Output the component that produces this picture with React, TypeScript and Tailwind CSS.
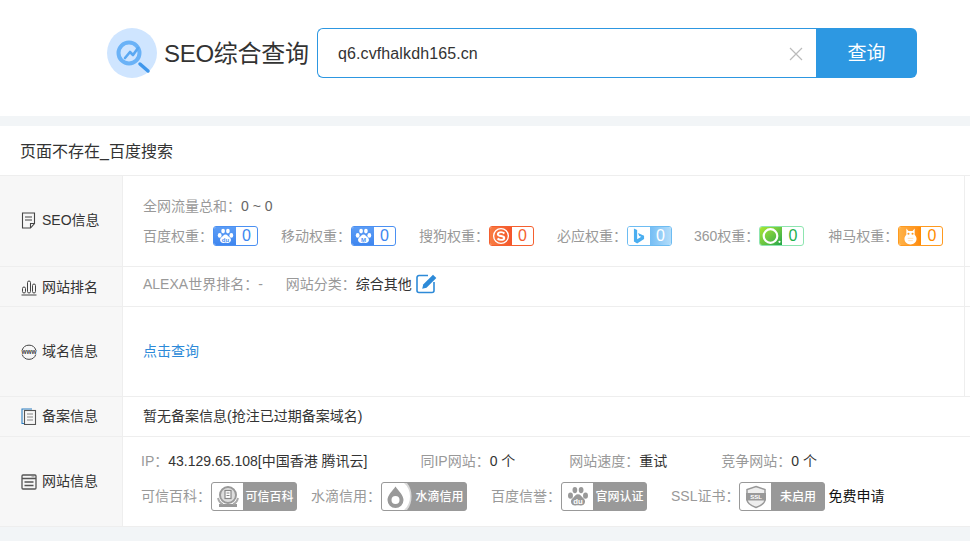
const sans = "font-['Liberation_Sans','Noto_Sans_CJK_SC',sans-serif]";

function Paw({ color = "#fff", label = "du" }: { color?: string; label?: string }) {
  return (
    <svg viewBox="0 0 24 24" className="h-full w-full">
      <ellipse cx="3.800" cy="10.500" rx="2.700" ry="3.300" fill={color} />
      <ellipse cx="8.600" cy="4.400" rx="2.600" ry="3.400" fill={color} />
      <ellipse cx="15.400" cy="4.400" rx="2.600" ry="3.400" fill={color} />
      <ellipse cx="20.200" cy="10.500" rx="2.700" ry="3.300" fill={color} />
      <path d="M12 9c2.800 0 3.400 2.200 5.200 3.800 2 1.700 2.800 3 2.400 5-.5 2.800-3 3.800-5 3.400-1.800-.3-3.400-.3-5.200 0-2 .4-4.500-.6-5-3.400-.4-2 .4-3.300 2.400-5C8.600 11.200 9.200 9 12 9z" fill={color} />
      <text x="12" y="20" textAnchor="middle" fontSize="8.500" fontWeight="700" fill={color === "#fff" ? "#4b90f2" : "#fff"} fontFamily="Liberation Sans">{label}</text>
    </svg>
  );
}

function SogouIcon() {
  return (
    <svg viewBox="0 0 20 20" className="h-[18px] w-[18px]">
      <circle cx="10" cy="10" r="8.200" fill="none" stroke="#fff" strokeWidth="1.500" />
      <path d="M13.800 7.200C12.800 6.200 11.500 5.700 10 5.700c-2.100 0-3.500 1-3.500 2.300 0 3 7.100 1.200 7.100 4.100 0 1.300-1.500 2.200-3.600 2.200-1.500 0-2.900-.5-3.900-1.500" fill="none" stroke="#fff" strokeWidth="2.200" />
    </svg>
  );
}

function BingIcon() {
  return (
    <svg viewBox="0 0 13 17" className="h-[16px] w-[12px]">
      <path d="M1 .5 4.500 2v10l4.500-2.600-2.300-1-1.300-3.200L12 8.200v3.600L4.500 16.500 1 14.500z" fill="#4aaef0" />
    </svg>
  );
}

function Icon360() {
  return (
    <svg viewBox="0 0 22 20" className="h-[20px] w-[22px]">
      <circle cx="10.500" cy="10" r="6.800" fill="none" stroke="#fff" strokeWidth="2.200" />
      <circle cx="19.500" cy="15.800" r="1.100" fill="#fff" />
    </svg>
  );
}

function OwlIcon() {
  return (
    <svg viewBox="0 0 14 18" className="h-[17px] w-[13px]">
      <path d="M2.500.5 4.800 3h4.400L11.500.5V7c1.300 1.400 2 2.800 2 4.500 0 3.500-2.800 6-6.500 6S.5 15 .5 11.500C.5 9.800 1.200 8.400 2.500 7z" fill="#fff" />
      <circle cx="4.800" cy="6" r="1.100" fill="#ff9a1f" />
      <circle cx="9.200" cy="6" r="1.100" fill="#ff9a1f" />
      <path d="M4 11h6M4.500 13.500h5" stroke="#ffd9a8" strokeWidth="0.900" />
    </svg>
  );
}

type Rank = {
  label: string;
  icon: React.ReactNode;
  iconBg: string;
  border: string;
  text: string;
  valueBg?: string;
  gap: string;
};

const ranks: Rank[] = [
  { label: "百度权重：", icon: <div className="h-[17px] w-[17px]"><Paw /></div>, iconBg: "bg-gradient-to-b from-[#5c9df6] to-[#3f86ef]", border: "border-[#4b90f2]", text: "text-[#3d87ef]", gap: "mr-[23px]" },
  { label: "移动权重：", icon: <div className="h-[17px] w-[17px]"><Paw label="M" /></div>, iconBg: "bg-gradient-to-b from-[#5c9df6] to-[#3f86ef]", border: "border-[#4b90f2]", text: "text-[#3d87ef]", gap: "mr-[23px]" },
  { label: "搜狗权重：", icon: <SogouIcon />, iconBg: "bg-gradient-to-r from-[#f87c42] to-[#f4552a]", border: "border-[#f5602f]", text: "text-[#f5602f]", gap: "mr-[23px]" },
  { label: "必应权重：", icon: <BingIcon />, iconBg: "bg-white", border: "border-[#6dbcf2]", text: "text-white", valueBg: "bg-gradient-to-r from-[#74bdf4] to-[#b3ddfa]", gap: "mr-[22px]" },
  { label: "360权重：", icon: <Icon360 />, iconBg: "bg-gradient-to-br from-[#a8e82e] to-[#17a648]", border: "border-[#8ee5b0]", text: "text-[#22b14c]", gap: "mr-[24px]" },
  { label: "神马权重：", icon: <OwlIcon />, iconBg: "bg-gradient-to-r from-[#ffb347] to-[#ff8a00]", border: "border-[#ff9a1f]", text: "text-[#ff8c00]", gap: "" },
];

function DocIcon() {
  return (
    <svg viewBox="0 0 16 17" className="h-[17px] w-[16px]" fill="none" stroke="#444" strokeWidth="1.100">
      <path d="M1.500 1h12v10.500L9.500 16h-8z" />
      <path d="M13.500 11.500h-4V16M4 5h7M4 8h7" />
    </svg>
  );
}

function BarsIcon() {
  return (
    <svg viewBox="0 0 16 17" className="h-[17px] w-[16px]" fill="none" stroke="#444" strokeWidth="1">
      <rect x="1.500" y="8" width="3" height="6" rx="1.500" />
      <rect x="6.500" y="2" width="3" height="12" rx="1.500" />
      <rect x="11.500" y="5" width="3" height="9" rx="1.500" />
      <path d="M.5 16h15" />
    </svg>
  );
}

function WwwIcon() {
  return (
    <svg viewBox="0 0 16 16" className="h-[16px] w-[16px]">
      <path d="M1.200 6a7.200 7.200 0 0 1 13.600 0M1.200 10.500a7.200 7.200 0 0 0 13.600 0" fill="none" stroke="#444" strokeWidth="1" />
      <text x="8" y="10.300" textAnchor="middle" fontSize="6.500" fontWeight="700" fill="#444" fontFamily="Liberation Sans" textLength="15">www</text>
    </svg>
  );
}

function RecordIcon() {
  return (
    <svg viewBox="0 0 16 17" className="h-[17px] w-[16px]" fill="none" strokeWidth="1.100">
      <path d="M3 15.500H1V1h10" stroke="#2d7fc1" />
      <rect x="3.500" y="2.500" width="11" height="14" stroke="#555" />
      <path d="M6 6h6M6 9h6M6 12h6" stroke="#888" />
    </svg>
  );
}

function SiteIcon() {
  return (
    <svg viewBox="0 0 16 16" className="h-[16px] w-[16px]" fill="none" stroke="#555" strokeWidth="1.300">
      <rect x="1" y="1" width="14" height="14" rx="1" />
      <path d="M1 4.500h14M3.500 8h9M3.500 11.500h9" />
      <path d="M10.500 2.800h3" strokeWidth="1" stroke="#999" />
    </svg>
  );
}

function EditIcon() {
  return (
    <svg viewBox="0 0 21 20" className="h-[20px] w-[21px]">
      <path d="M12 1.500H3A2 2 0 0 0 1 3.500v13a2 2 0 0 0 2 2h13a2 2 0 0 0 2-2V8" fill="none" stroke="#2d8ad8" strokeWidth="1.600" />
      <path d="M17 .8 20.300 4 10.500 13.800l-4.300 1 1-4.300z" fill="#2d8ad8" />
    </svg>
  );
}

function CreditBadge({ icon, label }: { icon: React.ReactNode; label: string }) {
  return (
    <div className="flex h-[29px] w-[86px] shrink-0 overflow-hidden rounded-[3px] border border-[#999] bg-[#999]">
      <div className="flex w-[31px] items-center justify-center bg-white">{icon}</div>
      <div className="flex w-[53px] items-center justify-center text-[12px] font-medium text-white">{label}</div>
    </div>
  );
}

function Label({ children }: { children: React.ReactNode }) {
  return <span className="text-[#999]">{children}</span>;
}

function Row({ icon, title, className, labelClass = "", children }: { icon: React.ReactNode; title: string; className: string; labelClass?: string; children: React.ReactNode }) {
  return (
    <div className={`flex border-b border-[#eee] ${className}`}>
      <div className={`flex w-[123px] shrink-0 items-center gap-[5px] border-r border-[#eee] bg-[#f7f7f7] pl-[21px] text-[#333] ${labelClass}`}>
        {icon}
        <span>{title}</span>
      </div>
      <div className="min-w-0 flex-1">{children}</div>
    </div>
  );
}

export default function App() {
  return (
    <div className={`h-[541px] w-[970px] overflow-hidden bg-[#f2f5f7] text-[14px] ${sans}`}>
      {/* Search header */}
      <header className="flex h-[116px] items-start bg-white pl-[107px] pt-[28px]">
        <div className="flex h-[50px] items-center">
          <svg viewBox="0 0 50 50" className="h-[50px] w-[50px]">
            <circle cx="25" cy="25" r="25" fill="#cfe5ff" />
            <circle cx="22" cy="25" r="10.500" fill="none" stroke="#6ab2f7" strokeWidth="4" />
            <path d="M33 36l8 7" stroke="#3f97ec" strokeWidth="3.500" strokeLinecap="round" />
            <path d="M18 30l5-6 3 3 5-7" fill="none" stroke="#5aa8f2" strokeWidth="2.600" strokeLinecap="round" strokeLinejoin="round" />
          </svg>
          <span className="ml-[7px] w-[153px] pt-[2px] text-[24px] tracking-[-0.3px] text-[#333]">SEO综合查询</span>
        </div>
        <div className="flex h-[50px] w-[600px]">
          <div className="flex w-[500px] items-center justify-between rounded-l-[6px] border border-r-0 border-[#2d97e1] pl-[20px] pr-[13px] pt-[2px]">
            <span className="text-[16px] tracking-[0.11px] text-[#333]">q6.cvfhalkdh165.cn</span>
            <svg viewBox="0 0 14 14" className="h-[14px] w-[14px]" stroke="#bbb" strokeWidth="1.200">
              <path d="M1 1l12 12M13 1 1 13" />
            </svg>
          </div>
          <button className="w-[101px] rounded-r-[6px] bg-[#2d98e2] pt-[2px] text-[19px] text-white">查询</button>
        </div>
      </header>

      <main className="mt-[10px] bg-white">
        <div className="flex h-[50px] items-center border-b border-[#eee] pl-[20px] pt-[2px] text-[16px] text-[#333]">页面不存在_百度搜索</div>

        <Row icon={<DocIcon />} title="SEO信息" className="h-[91px]" labelClass="pb-[1px]">
          <div className="mr-[5px] h-full border-r border-[#eee] pl-[20px] pt-[16px]">
            <div className="flex h-[28px] items-center">
              <Label>全网流量总和：</Label>
              <span className="text-[#666]">0 ~ 0</span>
            </div>
            <div className="mt-[2px] flex h-[28px] items-center">
              {ranks.map((r) => (
                <div key={r.label} className={`flex items-center ${r.gap}`}>
                  <Label>{r.label}</Label>
                  <div className={`flex h-[20px] w-[45px] overflow-hidden rounded-[3px] border ${r.border}`}>
                    <div className={`flex w-[22px] items-center justify-center ${r.iconBg}`}>{r.icon}</div>
                    <div className={`flex flex-1 items-center justify-center text-[16px] ${r.text} ${r.valueBg ?? ""}`}>0</div>
                  </div>
                </div>
              ))}
            </div>
          </div>
        </Row>

        <Row icon={<BarsIcon />} title="网站排名" className="h-[40px]" labelClass="pt-[1px]">
          <div className="mr-[5px] flex h-full items-center border-r border-[#eee] pb-[5px] pl-[20px]">
            <Label>ALEXA世界排名：</Label>
            <span className="text-[#999]">-</span>
            <span className="ml-[23px]"><Label>网站分类：</Label></span>
            <span className="text-[#333]">综合其他</span>
            <span className="ml-[4px]"><EditIcon /></span>
          </div>
        </Row>

        <Row icon={<WwwIcon />} title="域名信息" className="h-[90px]">
          <div className="mr-[5px] flex h-full items-center border-r border-[#eee] pl-[20px] text-[#2d8ad8]">点击查询</div>
        </Row>

        <Row icon={<RecordIcon />} title="备案信息" className="h-[40px]">
          <div className="flex h-full items-center pl-[20px] text-[#333]">暂无备案信息(抢注已过期备案域名)</div>
        </Row>

        <Row icon={<SiteIcon />} title="网站信息" className="h-[90px]">
          <div className="pl-[18px] pt-[10px]">
            <div className="flex h-[28px] items-center text-[#333]">
              <Label>IP：</Label>
              <span className="mr-[53px]">43.129.65.108[中国香港 腾讯云]</span>
              <Label>同IP网站：</Label>
              <span className="mr-[54px]">0 个</span>
              <Label>网站速度：</Label>
              <span className="mr-[54px]">重试</span>
              <Label>竞争网站：</Label>
              <span>0 个</span>
            </div>
            <div className="mt-[7px] flex items-center">
              <Label>可信百科：</Label>
              <CreditBadge
                label="可信百科"
                icon={
                  <svg viewBox="0 0 24 24" className="h-[24px] w-[24px]">
                    <circle cx="12" cy="10" r="8" fill="#ddd" stroke="#999" strokeWidth="2" />
                    <rect x="9" y="5.500" width="6" height="8" fill="#fff" stroke="#888" strokeWidth="1.200" />
                    <path d="M10.500 8h3M10.500 10.500h3" stroke="#888" strokeWidth="1" />
                    <path d="M3 19h18v3H3z" fill="#999" />
                    <path d="M2 13c1 4 3 5.500 5 6M22 13c-1 4-3 5.500-5 6" fill="none" stroke="#aaa" strokeWidth="2" />
                  </svg>
                }
              />
              <span className="ml-[14px]"><Label>水滴信用：</Label></span>
              <CreditBadge
                label="水滴信用"
                icon={
                  <svg viewBox="0 0 31 27" className="h-[27px] w-[31px] shrink-0">
                    <path d="M22 0c8 6 8 21 0 27h9V0z" fill="#d9d9d9" />
                    <path d="M25 0c6 6 6 21 0 27h6V0z" fill="#999" />
                    <path d="M13.500 3.500c3 4.500 8 8.500 8 13.500a8 8 0 0 1-16 0c0-5 5-9 8-13.500z" fill="#999" />
                    <circle cx="13.500" cy="17" r="4" fill="#fff" />
                  </svg>
                }
              />
              <span className="ml-[24px]"><Label>百度信誉：</Label></span>
              <CreditBadge label="官网认证" icon={<div className="h-[22px] w-[22px]"><Paw color="#999" /></div>} />
              <span className="ml-[24px]"><Label>SSL证书：</Label></span>
              <CreditBadge
                label="未启用"
                icon={
                  <svg viewBox="0 0 22 24" className="h-[24px] w-[22px]">
                    <path d="M11 1.500 20 4.500v10c0 4-5 6.500-9 8-4-1.500-9-4-9-8v-10z" fill="#eee" stroke="#999" strokeWidth="1.500" />
                    <rect x="1" y="8" width="20" height="7.500" fill="#999" />
                    <text x="11" y="14" textAnchor="middle" fontSize="6" fontWeight="700" fill="#fff" fontFamily="Liberation Sans">SSL</text>
                  </svg>
                }
              />
              <span className="ml-[3px] text-[#111]">免费申请</span>
            </div>
          </div>
        </Row>
      </main>
    </div>
  );
}
